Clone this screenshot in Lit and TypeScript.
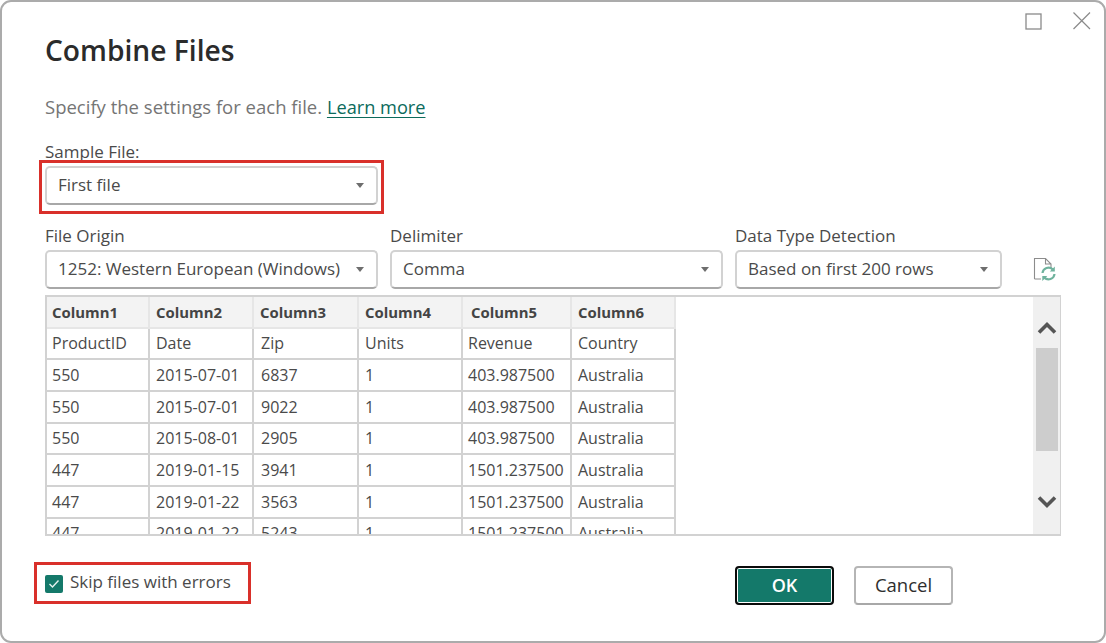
import { LitElement, html, css } from "lit";
import { customElement } from "lit/decorators.js";

const COLS = ["Column1", "Column2", "Column3", "Column4", "Column5", "Column6"];
const ROWS = [
  ["ProductID", "Date", "Zip", "Units", "Revenue", "Country"],
  ["550", "2015-07-01", "6837", "1", "403.987500", "Australia"],
  ["550", "2015-07-01", "9022", "1", "403.987500", "Australia"],
  ["550", "2015-08-01", "2905", "1", "403.987500", "Australia"],
  ["447", "2019-01-15", "3941", "1", "1501.237500", "Australia"],
  ["447", "2019-01-22", "3563", "1", "1501.237500", "Australia"],
  ["447", "2019-01-22", "5243", "1", "1501.237500", "Australia"],
];

@customElement("app-root")
export class AppRoot extends LitElement {
  static styles = css`
    :host { display: block; width: 1106px; height: 643px; background: #fff; font-family: "Open Sans", "Noto Sans", sans-serif; color: #444; overflow: hidden; }
    * { box-sizing: border-box; }
    .dialog { position: relative; width: 1106px; height: 643px; border: 2px solid #ababab; border-radius: 11px; padding: 0 44px 0 43px; display: flex; flex-direction: column; background: #fff; }
    .winctl { position: absolute; top: 9px; right: 13px; display: flex; gap: 29px; align-items: center; }
    .winctl svg { display: block; }
    h1 { margin: 31px 0 0; font-size: 28.2px; line-height: 34px; font-weight: 600; color: #2b2b2b; }
    .desc { margin: 27px 0 0; font-size: 18.5px; line-height: 26px; color: #757575; }
    .desc a { color: #0c6b5c; font-size: 18.2px; text-decoration: underline; text-underline-offset: 3px; }
    .lbl { font-size: 17px; line-height: 20px; color: #4a4a4a; display: block; }
    .sample { margin-top: 22px; }
    .sample .lbl { margin-bottom: 4px; }
    .marked { position: relative; }
    .frame { position: absolute; border: 3px solid #d9302a; pointer-events: none; }
    .select { height: 39px; border: 2px solid #d2d2d2; border-bottom-color: #a8a8a8; border-radius: 5px; background: #fff; display: flex; align-items: center; justify-content: space-between; padding: 0 12px 2px 11px; font-size: 17px; color: #4a4a4a; white-space: nowrap; }
    .caret { width: 0; height: 0; border-left: 4.5px solid transparent; border-right: 4.5px solid transparent; border-top: 5px solid #6e6e6e; margin-top: 1px; }
    .w333 { width: 333px; }
    .opts { display: flex; margin-top: 21px; align-items: flex-end; }
    .field { margin-right: 12px; }
    .field .lbl { margin-bottom: 4px; }
    .field.last { width: 267px; margin-right: 0; }
    .refresh { margin: 0 0 8px 31px; display: block; }
    .table { margin-top: 6px; width: 1016px; height: 241px; border: 2px solid #d2d2d2; border-right-width: 1px; display: flex; overflow: hidden; }
    .table-left { flex: 1; overflow: hidden; }
    .grid { display: grid; grid-template-columns: 103px 104px 105px 104px 109px 104px; grid-auto-rows: 31.67px; width: max-content; font-size: 16px; color: #4a4a4a; }
    .cell { border-right: 2px solid #d2d2d2; border-bottom: 2px solid #d2d2d2; padding: 0 0 0 5px; display: flex; align-items: center; white-space: nowrap; overflow: hidden; line-height: 20px; }
    .cell:nth-child(6n+2), .cell:nth-child(6n+4), .cell:nth-child(6n) { padding-left: 6px; }
    .cell:nth-child(6n+3) { padding-left: 7px; }
    .cell.head { background: #f3f3f3; border-color: #e6e6e6; font-weight: 700; font-size: 14.9px; color: #444; }
    .cell.head:nth-child(3) { padding-left: 6px; }
    .cell.head:nth-child(5) { padding-left: 8px; }
    .scroll { width: 27px; background: #f0f0f0; display: flex; flex-direction: column; align-items: center; }
    .scroll svg { display: block; }
    .thumb { width: 22px; height: 103px; background: #cdcdcd; margin-top: 13px; }
    .arrow-up { margin-top: 24px; }
    .arrow-dn { margin-top: 44px; }
    .footer { flex: 1; display: flex; align-items: flex-start; justify-content: space-between; }
    .check { display: flex; align-items: flex-start; gap: 7px; margin-top: 36px; font-size: 17px; line-height: 20px; color: #4a4a4a; position: relative; }
    .box { width: 18px; height: 18px; margin-top: 3px; background: #14796a; border-radius: 2px; display: flex; align-items: center; justify-content: center; }
    .btns { display: flex; gap: 20px; margin-top: 30px; margin-right: 107px; }
    .btn { width: 99px; height: 39px; border-radius: 4px; display: flex; align-items: center; justify-content: center; font-size: 18px; font-weight: 600; padding: 0 0 2px; }
    .ok { background: #14796a; color: #fff; border: 2px solid #0b0b0b; box-shadow: inset 0 0 0 1px #fff; }
    .cancel { background: #fff; color: #2e2e2e; border: 2px solid #b5b5b5; border-bottom-color: #a8a8a8; font-size: 18.5px; font-weight: 500; }
  `;

  private select(label: string) {
    return html`<div class="select"><span>${label}</span><span class="caret"></span></div>`;
  }

  render() {
    return html`
      <div class="dialog">
        <div class="winctl">
          <svg width="18" height="18" viewBox="0 0 18 18"><rect x="1" y="2" width="15" height="15" fill="none" stroke="#8a8a8a" stroke-width="1.3"/></svg>
          <svg width="19" height="19" viewBox="0 0 19 19"><path d="M1.5 1.5 18 18M18 1.5 1.5 18" fill="none" stroke="#8a8a8a" stroke-width="1.2"/></svg>
        </div>
        <h1>Combine Files</h1>
        <p class="desc">Specify the settings for each file. <a href="#">Learn more</a></p>
        <div class="sample">
          <span class="lbl">Sample File:</span>
          <div class="marked w333">
            ${this.select("First file")}
            <div class="frame" style="left:-6px;top:-6px;right:-6px;bottom:-9px"></div>
          </div>
        </div>
        <div class="opts">
          <div class="field w333"><span class="lbl">File Origin</span>${this.select("1252: Western European (Windows)")}</div>
          <div class="field w333"><span class="lbl">Delimiter</span>${this.select("Comma")}</div>
          <div class="field last"><span class="lbl">Data Type Detection</span>${this.select("Based on first 200 rows")}</div>
          <svg class="refresh" width="24" height="24" viewBox="0 0 24 24">
            <path d="M1.5 22V1.5H12.5L18 7V11M12.5 1.5V7H18M1.5 22H8" fill="none" stroke="#8c8c8c" stroke-width="1.1"/>
            <path d="M9.5 16a6 6 0 0 1 10.2-3.6M21.5 17a6 6 0 0 1-10.2 3.6" fill="none" stroke="#6fb29d" stroke-width="2.2"/>
            <path d="M21.8 9.5v5h-5zM9.3 24v-5h5z" fill="#6fb29d"/>
          </svg>
        </div>
        <div class="table">
          <div class="table-left">
            <div class="grid">
              ${COLS.map((c) => html`<div class="cell head">${c}</div>`)}
              ${ROWS.map((r) => r.map((c) => html`<div class="cell">${c}</div>`))}
            </div>
          </div>
          <div class="scroll">
            <svg class="arrow-up" width="20" height="14" viewBox="0 0 20 14"><path d="M2 11.5 10 3.5 18 11.5" fill="none" stroke="#555" stroke-width="3.6"/></svg>
            <div class="thumb"></div>
            <svg class="arrow-dn" width="20" height="14" viewBox="0 0 20 14"><path d="M2 2.5 10 10.5 18 2.5" fill="none" stroke="#555" stroke-width="3.6"/></svg>
          </div>
        </div>
        <div class="footer">
          <div class="check">
            <div class="box"><svg width="12" height="10" viewBox="0 0 12 10"><path d="M1.5 5 4.5 8 10.5 1.5" fill="none" stroke="#e6f2ef" stroke-width="1.4"/></svg></div>
            <span>Skip files with errors</span>
            <div class="frame" style="left:-11px;top:-10px;right:-20px;bottom:-11px"></div>
          </div>
          <div class="btns">
            <div class="btn ok">OK</div>
            <div class="btn cancel">Cancel</div>
          </div>
        </div>
      </div>
    `;
  }
}
